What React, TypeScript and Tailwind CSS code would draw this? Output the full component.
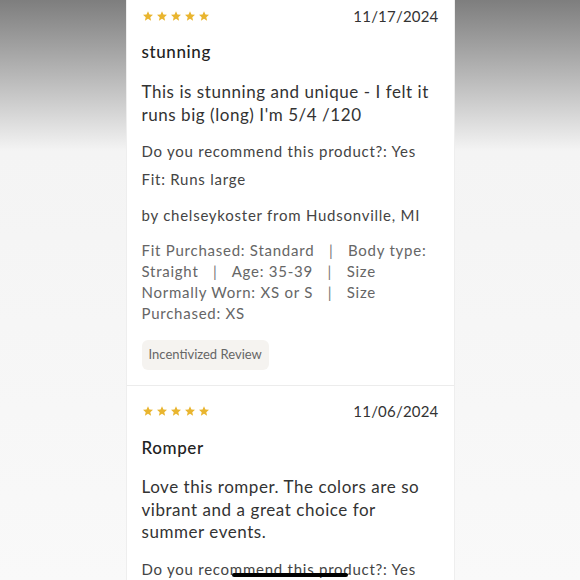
const FONT = { fontFamily: "Lato, 'Noto Sans', sans-serif" };

function Stars() {
  return (
    <div className="flex items-center gap-[2px]">
      {[0, 1, 2, 3, 4].map((i) => (
        <svg key={i} width="12" height="12" viewBox="0 0 24 24" className="fill-[#e9b52f]">
          <path d="M12 2.5l2.9 6.6 7.1.6-5.4 4.7 1.6 7-6.2-3.7-6.2 3.7 1.6-7L2 9.7l7.1-.6z" />
        </svg>
      ))}
    </div>
  );
}

function Sep() {
  return <span className="px-[10px] text-[#777]">|</span>;
}

export default function App() {
  return (
    <div
      className="relative flex h-[580px] w-[580px] justify-center overflow-hidden bg-gradient-to-b from-[#7e7e7e] via-[#f4f4f4] via-[26%] to-[#f9f9f9]"
      style={FONT}
    >
      <div className="flex w-[329px] flex-col border-x border-[#eeeeee] bg-white">
        {/* first review */}
        <div className="px-[15px] pt-[6px]">
          <div className="flex h-5 items-center justify-between">
            <Stars />
            <span className="text-[15px] tracking-[0.2px] text-[#333]">11/17/2024</span>
          </div>
          <p className="mt-[14px] text-[17px] leading-[24px] tracking-[0.6px] font-medium text-[#222]">stunning</p>
          <p className="mt-4 text-[17px] leading-[23px] tracking-[0.55px] text-[#333]">
            This is stunning and unique - I felt it runs big (long) I'm 5/4 /120
          </p>
          <p className="mt-[14px] text-[15px] leading-[22px] tracking-[0.75px] text-[#444]">
            Do you recommend this product?: Yes
          </p>
          <p className="mt-[6px] text-[15px] leading-[22px] tracking-[0.75px] text-[#444]">Fit: Runs large</p>
          <p className="mt-[14px] text-[15px] leading-[22px] tracking-[0.75px] text-[#444]">
            by chelseykoster from Hudsonville, MI
          </p>
          <p className="mt-[14px] text-[15px] leading-[21px] tracking-[0.75px] text-[#666]">
            Fit Purchased: Standard <Sep /> Body type: Straight <Sep /> Age: 35-39 <Sep /> Size{" "}
            {"Normally\u00a0Worn:"} XS or S <Sep /> Size {"Purchased:\u00a0XS"}
          </p>
          <div className="mt-4 inline-flex h-[30px] items-center rounded-md bg-[#f5f3f0] px-[7px] text-[13px] text-[#666]">
            Incentivized Review
          </div>
        </div>
        <div className="mt-[15px] h-px bg-[#ececec]" />

        {/* second review */}
        <div className="px-[15px] pt-[15px]">
          <div className="flex h-5 items-center justify-between">
            <Stars />
            <span className="text-[15px] tracking-[0.2px] text-[#333]">11/06/2024</span>
          </div>
          <p className="mt-[15px] text-[17px] leading-[24px] tracking-[0.6px] font-medium text-[#222]">Romper</p>
          <p className="mt-4 text-[17px] leading-[22.5px] tracking-[0.55px] text-[#333]">
            Love this romper. The colors are so vibrant and a great choice for summer events.
          </p>
          <p className="mt-[14px] text-[15px] leading-[22px] tracking-[0.75px] text-[#444]">
            Do you recommend this product?: Yes
          </p>
        </div>
      </div>

      {/* home indicator */}
      <div className="absolute bottom-[3px] left-[232px] h-[4px] w-[116px] rounded-full bg-black" />
    </div>
  );
}
